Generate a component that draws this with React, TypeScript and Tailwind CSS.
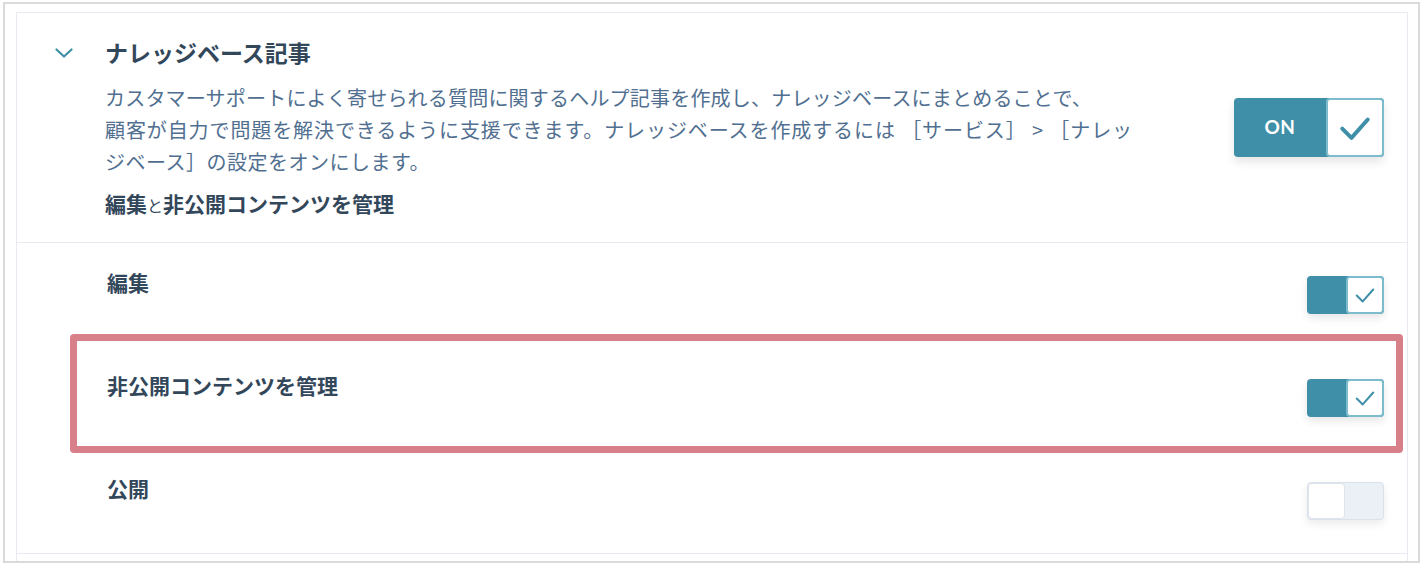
import React from "react";

const FONT = { fontFamily: '"Noto Sans CJK JP", "Noto Sans", sans-serif' };

function Check({ size, stroke }: { size: number; stroke: number }) {
  return (
    <svg width={size} height={size} viewBox="0 0 24 24" fill="none">
      <path d="M3 12.5 L9.5 19 L21 6" stroke="#3f8fa8" strokeWidth={stroke} strokeLinecap="round" strokeLinejoin="round" />
    </svg>
  );
}

function SmallToggle({ on }: { on: boolean }) {
  if (on) {
    return (
      <div className="flex h-[38px] w-[77px] rounded-[4px] bg-[#3f8fa8] shadow-[0_4px_8px_rgba(0,0,0,0.10)]">
        <div className="flex-1" />
        <div className="flex h-[38px] w-[38px] items-center justify-center rounded-[4px] border-2 border-[#7cbccc] bg-white">
          <Check size={22} stroke={2.2} />
        </div>
      </div>
    );
  }
  return (
    <div className="flex h-[38px] w-[77px] rounded-[4px] border border-[#d9e1ea] bg-[#eaf0f6] shadow-[0_4px_8px_rgba(0,0,0,0.08)]">
      <div className="h-[36px] w-[37px] rounded-[4px] border border-[#dfe3eb] bg-white" />
    </div>
  );
}

function Row({ label, on, last }: { label: string; on: boolean; last?: boolean }) {
  return (
    <div
      className={
        last
          ? "flex h-[105px] items-start justify-between border-b border-[#e7eaf0] pl-[90px] pr-[23px]"
          : "flex h-[103px] items-start justify-between pl-[90px] pr-[23px]"
      }
    >
      <div className="pt-[25px] text-[21px] font-bold leading-[28px] text-[#33475b]">{label}</div>
      <div className="mt-[33px]">
        <SmallToggle on={on} />
      </div>
    </div>
  );
}

export default function App() {
  return (
    <div className="relative h-[566px] w-[1424px] bg-white pl-[3px] pr-[4px] pt-[2px] pb-[3px]" style={FONT}>
      <div className="flex h-full flex-col border-2 border-[#dadada]">
        <div className="ml-[11px] mr-[10px] mt-[8px] flex-1 overflow-hidden border-l border-r border-t border-[#e7eaf0]">
          {/* header */}
          <div className="flex h-[230px] items-center border-b border-[#e7eaf0] pr-[23px]">
            <div className="flex h-full flex-1 pl-[38px] pt-[24px]">
              <div className="w-[50px] pt-[11px]">
                <svg width="18" height="10" viewBox="0 0 18 10" fill="none">
                  <path d="M1.5 1.5 L9 8.5 L16.5 1.5" stroke="#3f8fa8" strokeWidth="2.2" strokeLinecap="round" strokeLinejoin="round" />
                </svg>
              </div>
              <div className="flex flex-col">
                <div className="text-[23px] font-bold leading-[30px] text-[#33475b]">ナレッジベース記事</div>
                <div className="mt-[15px] text-[20px] leading-[32px] text-[#516f90]">
                  <span className="block whitespace-nowrap tracking-[0.2px]">カスタマーサポートによく寄せられる質問に関するヘルプ記事を作成し、ナレッジベースにまとめることで、</span>
                  <span className="block whitespace-pre tracking-[0.9px]">顧客が自力で問題を解決できるように支援できます。ナレッジベースを作成するには ［サービス］ &gt; ［ナレッ</span>
                  <span className="block whitespace-nowrap tracking-[0.5px]">ジベース］の設定をオンにします。</span>
                </div>
                <div className="mt-[9px] text-[21px] leading-[32px] text-[#33475b]">
                  <span className="font-bold">編集</span>
                  <span className="text-[16px]">と</span>
                  <span className="font-bold">非公開コンテンツを管理</span>
                </div>
              </div>
            </div>
            <div className="flex h-[59px] w-[150px] rounded-[4px] bg-[#3f8fa8] shadow-[0_5px_10px_rgba(0,0,0,0.10)]">
              <div className="flex flex-1 items-center justify-center text-[19px] font-bold tracking-[0.5px] text-white" style={{ fontFamily: 'Lato, "Noto Sans", sans-serif' }}>
                ON
              </div>
              <div className="flex h-[59px] w-[58px] items-center justify-center rounded-[4px] border-2 border-[#7cbccc] bg-white">
                <Check size={34} stroke={2.8} />
              </div>
            </div>
          </div>
          <Row label="編集" on={true} />
          <Row label="非公開コンテンツを管理" on={true} />
          <Row label="公開" on={false} last />
        </div>
      </div>
      <div className="pointer-events-none absolute left-[70px] top-[334px] h-[119px] w-[1333px] rounded-[4px] border-[7px] border-[#d8808a]" />
    </div>
  );
}
